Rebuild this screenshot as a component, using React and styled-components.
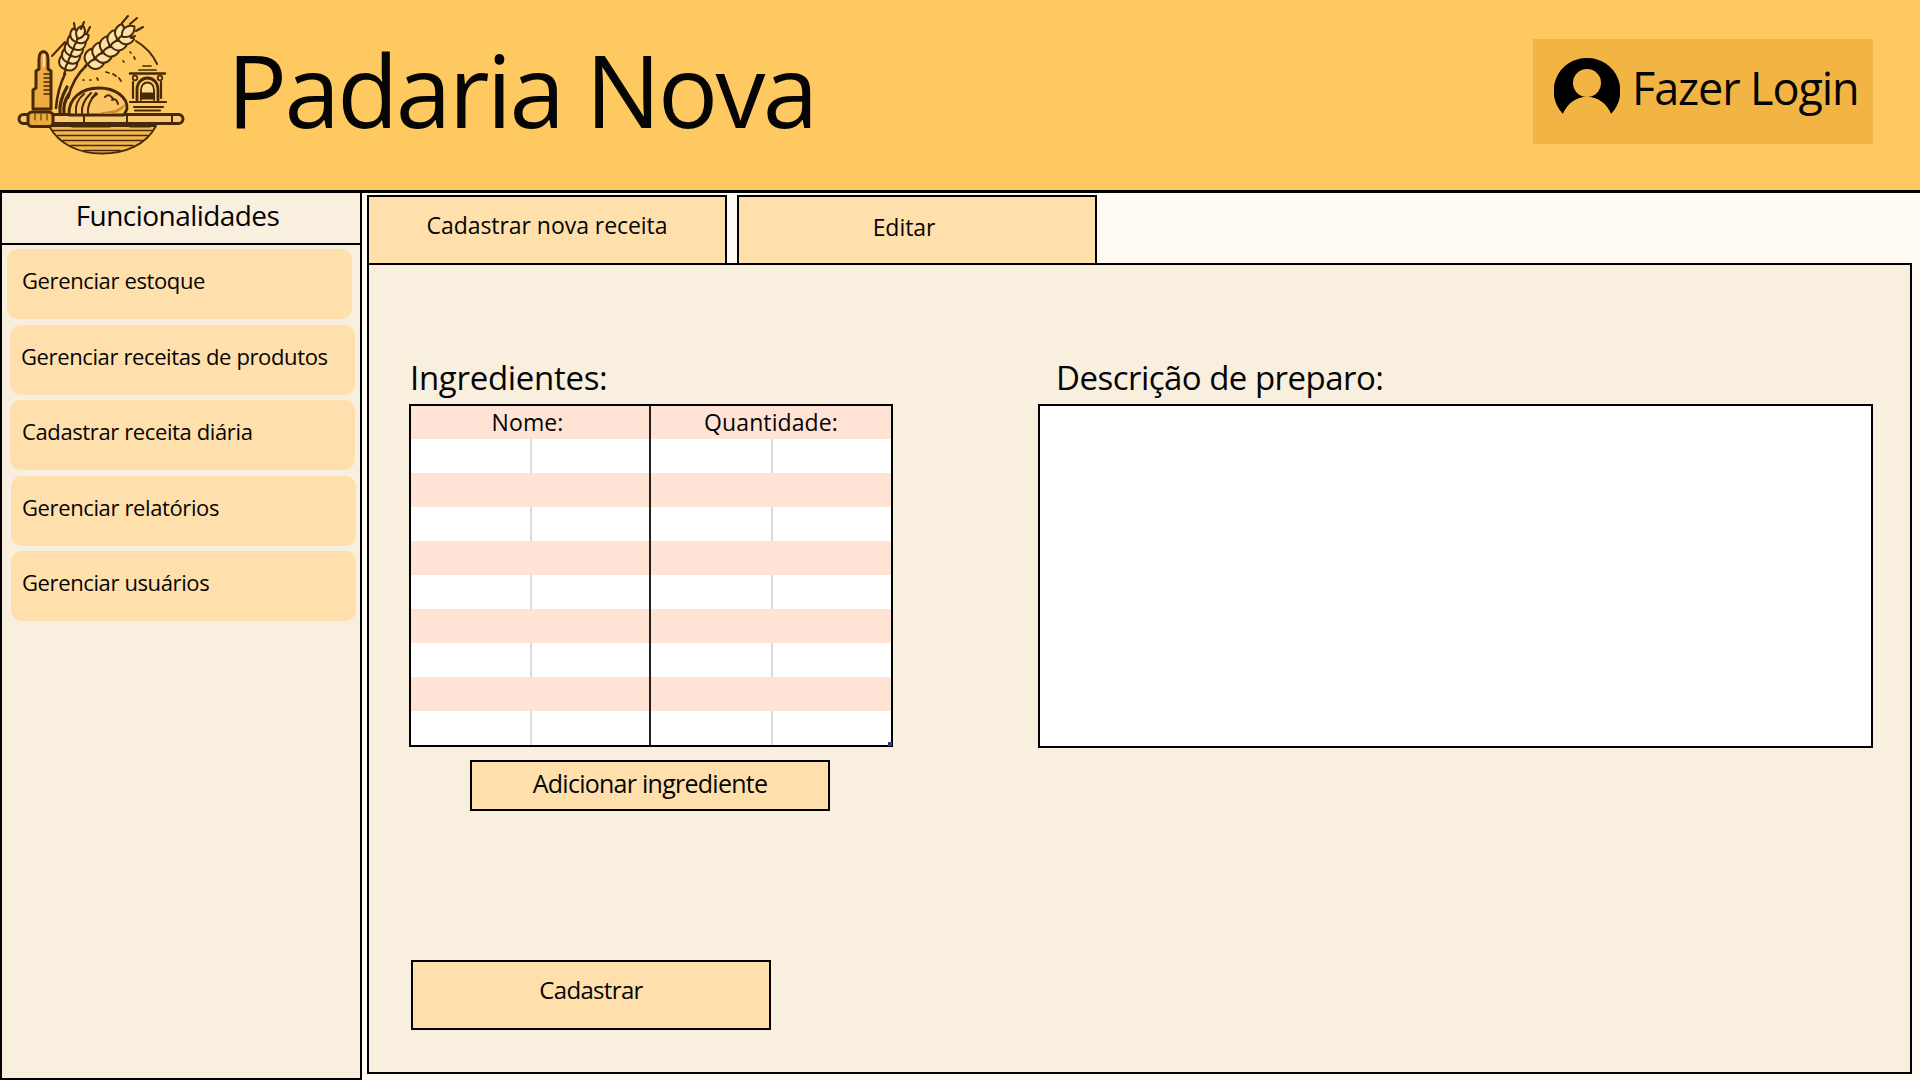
import React from "react";
import styled, { createGlobalStyle } from "styled-components";

const Global = createGlobalStyle`
  html, body { margin: 0; padding: 0; height: 100%; background: #fffbf3; }
  * { box-sizing: border-box; }
  body { font-family: "Open Sans", "Noto Sans", sans-serif; color: #050505; }
`;
const Page = styled.div`width: 1920px; height: 1080px; display: flex; flex-direction: column; overflow: hidden;`;
const Header = styled.header`
  height: 193px; flex: none; background: #fec961; border-bottom: 3px solid #000;
  display: flex; align-items: flex-start; position: relative;
`;
const LogoBox = styled.svg`width: 220px; height: 190px; flex: none;`;
const Title = styled.h1`
  margin: 31px 0 0 7px; font-size: 100px; line-height: 116px; font-weight: 400; letter-spacing: -2.7px; white-space: nowrap;
`;
const Login = styled.button`
  margin: 39px 47px 0 auto; width: 340px; height: 105px; border: 0; background: #f2b443;
  display: flex; align-items: flex-start; padding: 19px 0 0 21px; gap: 12px; font-family: inherit; color: #050505;
`;
const LoginText = styled.span`font-size: 45px; line-height: 60px; letter-spacing: -1.1px; white-space: nowrap;`;
const Main = styled.div`flex: 1; display: flex; min-height: 0;`;
const Sidebar = styled.aside`
  width: 362px; flex: none; background: #f9efdf; border: 2px solid #000; border-top: 0; display: flex; flex-direction: column;
`;
const SideTitle = styled.div`
  height: 52px; flex: none; border-bottom: 2px solid #000; text-align: center; font-size: 28px; line-height: 44px; letter-spacing: -0.55px; padding-right: 7px;
`;
const SideList = styled.nav`display: flex; flex-direction: column; gap: 5.5px; padding-top: 4px;`;
const SideItem = styled.div`
  width: 345px; height: 70px; margin-left: ${p => p.$x}px; border-radius: 11px; background: #ffe0ac;
  padding: 15px 0 0 ${p => p.$pad}px; font-size: 22px; line-height: 32px; letter-spacing: -0.38px; white-space: nowrap;
`;
const Content = styled.main`flex: 1; min-width: 0; padding: 2px 8px 6px 5px; display: flex; flex-direction: column;`;
const Tabs = styled.div`display: flex; gap: 7px; height: 70px; flex: none; margin-bottom: -2px;`;
const Tab = styled.div`
  width: 360px; height: 70px; background: #ffe0ac; border: 2px solid #000;
  text-align: center; font-size: 23px; line-height: 32px; letter-spacing: -0.05px; padding-top: ${p => p.$top}px; padding-right: ${p => p.$right}px; margin-left: ${p => p.$left}px; white-space: nowrap;
`;
const Panel = styled.section`
  flex: 1; background: #f9efdf; border: 2px solid #000; padding: 94px 37px 0 40px; display: flex; flex-direction: column;
`;
const Columns = styled.div`display: grid; grid-template-columns: 484px 835px; column-gap: 145px; align-items: start;`;
const Column = styled.div`display: flex; flex-direction: column; align-items: stretch;`;
const Label = styled.div`
  font-size: 33px; line-height: 37px; height: 45px; letter-spacing: ${p => p.$ls}px; padding-left: ${p => p.$pad}px; white-space: nowrap;
`;
const Table = styled.div`
  width: 484px; height: 343px; border: 2px solid #000; background: #fff; display: grid; grid-template-rows: 33px repeat(9, 1fr); position: relative;
`;
const Row = styled.div`display: grid; grid-template-columns: 1fr 1fr; background: ${p => p.$pink ? "#ffe4d6" : "#fff"};`;
const Cell = styled.div`
  position: relative; text-align: center; font-size: 23px; line-height: 32px; letter-spacing: 0.1px; padding-right: ${p => p.$right || 0}px;
  &:first-child { border-right: 2px solid #222; }
  &::after {
    content: ""; position: absolute; top: 0; bottom: 0; left: 50%; width: 2px; background: #dcdcdc;
    display: ${p => p.$grid ? "block" : "none"};
  }
`;
const Handle = styled.span`position: absolute; right: -1px; bottom: -1px; width: 4px; height: 4px; background: #2b3c8c;`;
const AddButton = styled.div`
  width: 360px; height: 51px; margin: 13px 0 0 61px; background: #ffe0ac; border: 2px solid #000; text-align: center;
  font-size: 25px; line-height: 42px; letter-spacing: -0.74px;
`;
const TextBox = styled.div`height: 344px; background: #fff; border: 2px solid #000;`;
const Submit = styled.div`
  width: 360px; height: 70px; margin: 149px 0 0 2px; background: #ffe0ac; border: 2px solid #000; text-align: center;
  font-size: 24px; line-height: 42px; padding-top: 7px; letter-spacing: -0.67px;
`;

const D = "#472807";
const Kernel = ({ x, y, a, L }) => (
  <path d={`M0 0 C${L * 0.3} ${-L * 0.44} ${L * 0.75} ${-L * 0.36} ${L} 0 C${L * 0.75} ${L * 0.36} ${L * 0.3} ${L * 0.44} 0 0 Z`}
    transform={`translate(${x} ${y}) rotate(${a})`} fill="#fde2a4" stroke={D} strokeWidth="2" strokeLinejoin="round" />
);
const Ear = ({ x0, y0, x1, y1, n = 5, L = 12 }) => {
  const dx = x1 - x0, dy = y1 - y0;
  const a = (Math.atan2(dy, dx) * 180) / Math.PI;
  const out = [];
  for (let i = 0; i < n; i++) {
    const t = (i + 0.1) / n;
    const x = x0 + dx * t, y = y0 + dy * t;
    out.push(<Kernel key={`a${i}`} x={x} y={y} a={a - 38} L={L} />);
    out.push(<Kernel key={`b${i}`} x={x} y={y} a={a + 38} L={L} />);
  }
  out.push(<Kernel key="tip" x={x1 - dx * 0.08} y={y1 - dy * 0.08} a={a} L={L} />);
  return <g>{out}</g>;
};
const Logo = () => (
  <LogoBox viewBox="0 0 220 190">
    <g fill="none" stroke={D} strokeLinecap="round" strokeLinejoin="round">
      {/* bowl */}
      <path d="M49 126 H156 C146 145 125 153.500 102 153.500 C78 153.500 59 144 49 126 Z" fill="#f2b850" strokeWidth="1.800" />
      <path d="M53 130.500 H152 M58 135.500 H148 M63 140.500 H142 M71 145.500 H133 M84 150.500 H120" strokeWidth="1.700" />
      <path d="M72 126.500 H110 M130 126.500 H150" strokeWidth="1.800" />
      {/* rolling pin */}
      <rect x="19" y="114.500" width="164" height="9" rx="4.500" fill="#f9c873" strokeWidth="3" />
      <path d="M84 115 V123 M127 115 V123 M172 115 V123" strokeWidth="2" />
      <rect x="28" y="112" width="25" height="14.500" rx="4" fill="#eea93f" strokeWidth="3" />
      <path d="M35 114 V120 M41 114 V120 M47 114 V120" strokeWidth="1" />
      {/* bottle */}
      <path d="M33 109 V90 L36 88 V71 L39 69 V59 C39 49 48 49 48 59 V69 L51 71 V109 Z" fill="#f0ac42" strokeWidth="3" />
      <path d="M44 55 V66" stroke="#fde2a4" strokeWidth="2" />
      <path d="M44 74 H50 M44 78 H50 M44 82 H50 M44 86 H50 M44 90 H50 M44 94 H50" strokeWidth="1.300" />
      {/* bread */}
      <path d="M69 115 C68 98 82 88 99 88 C115 88 128 97 127 109 L124 115 Z" fill="#fbc667" strokeWidth="2.800" />
      <path d="M105 114 C118 114 124 110 125 104 C118 110 110 112 100 112 Z" fill="#d58a2e" stroke="none" />
      <path d="M76 113 C75 105 79 98 84 94 M82 113 C81 105 86 98 91 93 M88 113 C87 105 91 99 96 93" strokeWidth="2" />
      <path d="M105 97 C108 94 111 95 113 99 M112 100 C115 98 117 100 118 104 M92 98 C94 96 95 95 97 94" strokeWidth="2" />
      <path d="M60 113 C59 104 62 96 67 87 M64 113 C63 106 65 100 69 94" strokeWidth="3.200" />
      {/* stems */}
      <path d="M56 108 C57 96 60 84 65 74" strokeWidth="2.600" />
      <path d="M68 98 C71 86 77 74 86 66" strokeWidth="2.600" />
      <path d="M64 74 L82 33" strokeWidth="2" />
      <path d="M85 66 L131 30" strokeWidth="2" />
      <Ear x0={65} y0={70} x1={79} y1={36} n={5} L={14} />
      <Ear x0={87} y0={65} x1={125} y1={34} n={5} L={16} />
      <path d="M74 23 L75 29 M84 22 L81 29 M90 27 L87 33 M128 16 L122 23 M137 18 L130 24 M143 27 L136 31 M135 36 L131 38" strokeWidth="2.100" />
      <path d="M52 56 L65 42 M136 41 C146 47 153 55 157 64" strokeWidth="2" />
      {/* dots */}
      <path d="M130 52 L131 53 M134 57 L135 59 M123 61 L124 62 M106 72 L109 73 M113 74 L116 76 M119 78 L121 81 M83 80 L84 80 M90 80 L91 80 M97 78 L98 80 M143 66 H151 M139 70 H156" strokeWidth="1.700" />
      {/* oven */}
      <path d="M130 73.500 H165" strokeWidth="2.400" />
      <circle cx="135" cy="78" r="2.300" strokeWidth="1.700" /><circle cx="160" cy="78" r="2.300" strokeWidth="1.700" />
      <path d="M137 100 V90 C137 74 158 74 158 90 V100" strokeWidth="2.800" />
      <path d="M141 100 V90 C141 80 154 80 154 90 V100" strokeWidth="1.800" fill="#ffd98f" />
      <rect x="140" y="92.500" width="15" height="7" fill={D} stroke="none" />
      <path d="M133 82 V98 M161 82 V98 M130 102 H166 M134 107 H163 M135 110.500 H160" strokeWidth="2.200" />
    </g>
  </LogoBox>
);
const UserIcon = () => (
  <svg width="66" height="66" viewBox="0 0 66 66" style={{ flex: "none" }}>
    <path d="M33 0 A33 33 0 0 1 57 56 C53 46 44 39 33 39 C22 39 13 46 9 56 A33 33 0 0 1 33 0 Z" fill="#000" />
    <circle cx="33" cy="25" r="14" fill="#f2b443" />
    <path d="M9 56 C13 46 22 39 33 39 C44 39 53 46 57 56 L50 66 H16 Z" fill="#f2b443" />
  </svg>
);

export default function App() {
  const rows = Array.from({ length: 9 }, (_, i) => i);
  return (
    <Page>
      <Global />
      <Header>
        <Logo />
        <Title>Padaria Nova</Title>
        <Login><UserIcon /><LoginText>Fazer Login</LoginText></Login>
      </Header>
      <Main>
        <Sidebar>
          <SideTitle>Funcionalidades</SideTitle>
          <SideList>
            <SideItem $x={5} $pad={15}>Gerenciar estoque</SideItem>
            <SideItem $x={8} $pad={11}>Gerenciar receitas de produtos</SideItem>
            <SideItem $x={8} $pad={12}>Cadastrar receita diária</SideItem>
            <SideItem $x={9} $pad={11}>Gerenciar relatórios</SideItem>
            <SideItem $x={9} $pad={11}>Gerenciar usuários</SideItem>
          </SideList>
        </Sidebar>
        <Content>
          <Tabs>
            <Tab $top={12} $left={0} $right={0}>Cadastrar nova receita</Tab>
            <Tab $top={14} $left={3} $right={26}>Editar</Tab>
          </Tabs>
          <Panel>
            <Columns>
              <Column>
                <Label $pad={1} $ls={-0.3}>Ingredientes:</Label>
                <Table>
                  <Row $pink><Cell $right={5}>Nome:</Cell><Cell>Quantidade:</Cell></Row>
                  {rows.map(i => (
                    <Row key={i} $pink={i % 2 === 1}>
                      <Cell $grid={i % 2 === 0} /><Cell $grid={i % 2 === 0} />
                    </Row>
                  ))}
                  <Handle />
                </Table>
                <AddButton>Adicionar ingrediente</AddButton>
              </Column>
              <Column>
                <Label $pad={18} $ls={-0.52}>Descrição de preparo:</Label>
                <TextBox />
              </Column>
            </Columns>
            <Submit>Cadastrar</Submit>
          </Panel>
        </Content>
      </Main>
    </Page>
  );
}
